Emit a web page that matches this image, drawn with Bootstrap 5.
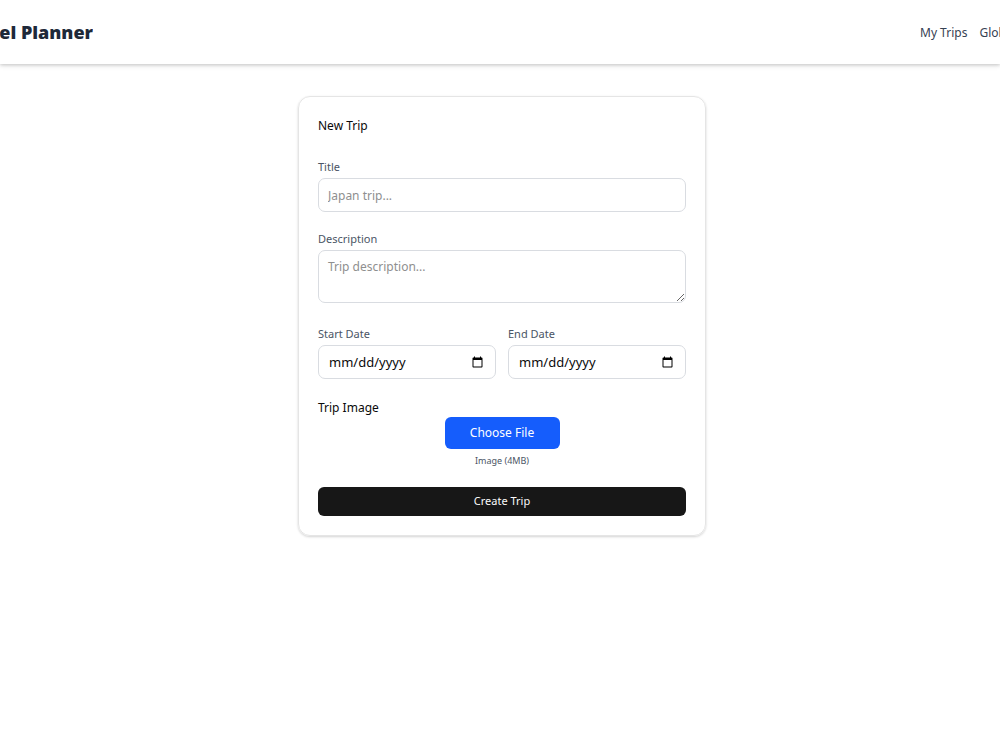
<!DOCTYPE html>
<html lang="en">
<head>
<meta charset="utf-8">
<meta name="viewport" content="width=device-width, initial-scale=1">
<title>Travel Planner</title>
<link href="https://cdn.jsdelivr.net/npm/bootstrap@5.3.0/dist/css/bootstrap.min.css" rel="stylesheet">
<style>
body { font-family: "Noto Sans", "Open Sans", sans-serif; font-size: 13px; line-height: 19px; color: #0a0a0a; background: #fff; }
.site-header { height: 64px; box-shadow: 0 1px 3px rgba(0,0,0,.14), 0 2px 5px rgba(0,0,0,.1); }
.brand-box { width: 93px; }
.brand-name { font-family: "Open Sans", sans-serif; font-weight: 800; font-size: 18px; line-height: 26px; color: #1e2939; }
.menu-box { width: 80px; gap: 12px; }
.menu-box a { color: #364153; font-size: 12px; }
.trip-card { width: 408px; max-width: 100%; margin-top: 32px; border: 1px solid #e5e5e5; border-radius: 12px; box-shadow: 0 1px 3px rgba(0,0,0,.1), 0 1px 2px rgba(0,0,0,.08); padding: 19px; }
.trip-card h1, .section-label { font-size: 12px; line-height: 20px; font-weight: 400; }
.trip-card h1 { margin-bottom: 23px; }
.field-label { font-size: 11px; line-height: 16px; color: #4a5565; margin-bottom: 3px; }
.form-control { font-size: 12px; line-height: 19px; height: 34px; padding: 6px 9px; border-color: #d9dce1; border-radius: 7px; color: #0a0a0a; }
.form-control[type="date"] { font-size: 13px; padding-left: 10px; }
.form-control::placeholder { color: #8f8f8f; }
textarea.form-control { height: 53px; min-height: 53px; }
.field-gap { margin-bottom: 19px; }
.date-row { --bs-gutter-x: 12px; margin-top: 23px; }
.btn-file { background: #155dfc; color: #fff; width: 115px; height: 32px; padding: 0; font-size: 12px; border: 0; border-radius: 6px; }
.hint { font-size: 9px; line-height: 14px; color: #4a5565; margin-top: 5px; }
.btn-create { background: #171717; color: #fafafa; height: 29px; padding: 0; font-size: 11px; border: 0; border-radius: 6px; margin-top: 19px; }
.section-label { line-height: 19px; }
</style>
</head>
<body>
<header class="site-header d-flex justify-content-between align-items-center">
  <div class="brand-box d-flex justify-content-end overflow-hidden"><span class="brand-name text-nowrap">Travel Planner</span></div>
  <nav class="menu-box d-flex overflow-hidden text-nowrap">
    <a class="text-decoration-none" href="#">My Trips</a>
    <a class="text-decoration-none" href="#">Globe</a>
  </nav>
</header>
<main class="d-flex justify-content-center ps-1 pb-4">
  <form class="trip-card">
    <h1>New Trip</h1>
    <div class="field-gap">
      <label class="field-label d-block" for="title">Title</label>
      <input class="form-control" id="title" type="text" placeholder="Japan trip...">
    </div>
    <div>
      <label class="field-label d-block" for="description">Description</label>
      <textarea class="form-control d-block" id="description" placeholder="Trip description..."></textarea>
    </div>
    <div class="row date-row field-gap">
      <div class="col">
        <label class="field-label d-block" for="start">Start Date</label>
        <input class="form-control" id="start" type="date">
      </div>
      <div class="col">
        <label class="field-label d-block" for="end">End Date</label>
        <input class="form-control" id="end" type="date">
      </div>
    </div>
    <div class="section-label">Trip Image</div>
    <div class="d-flex flex-column align-items-center">
      <button class="btn btn-file" type="button">Choose File</button>
      <div class="hint">Image (4MB)</div>
    </div>
    <button class="btn btn-create w-100" type="submit">Create Trip</button>
  </form>
</main>
<script src="https://cdn.jsdelivr.net/npm/bootstrap@5.3.0/dist/js/bootstrap.bundle.min.js"></script>
</body>
</html>
